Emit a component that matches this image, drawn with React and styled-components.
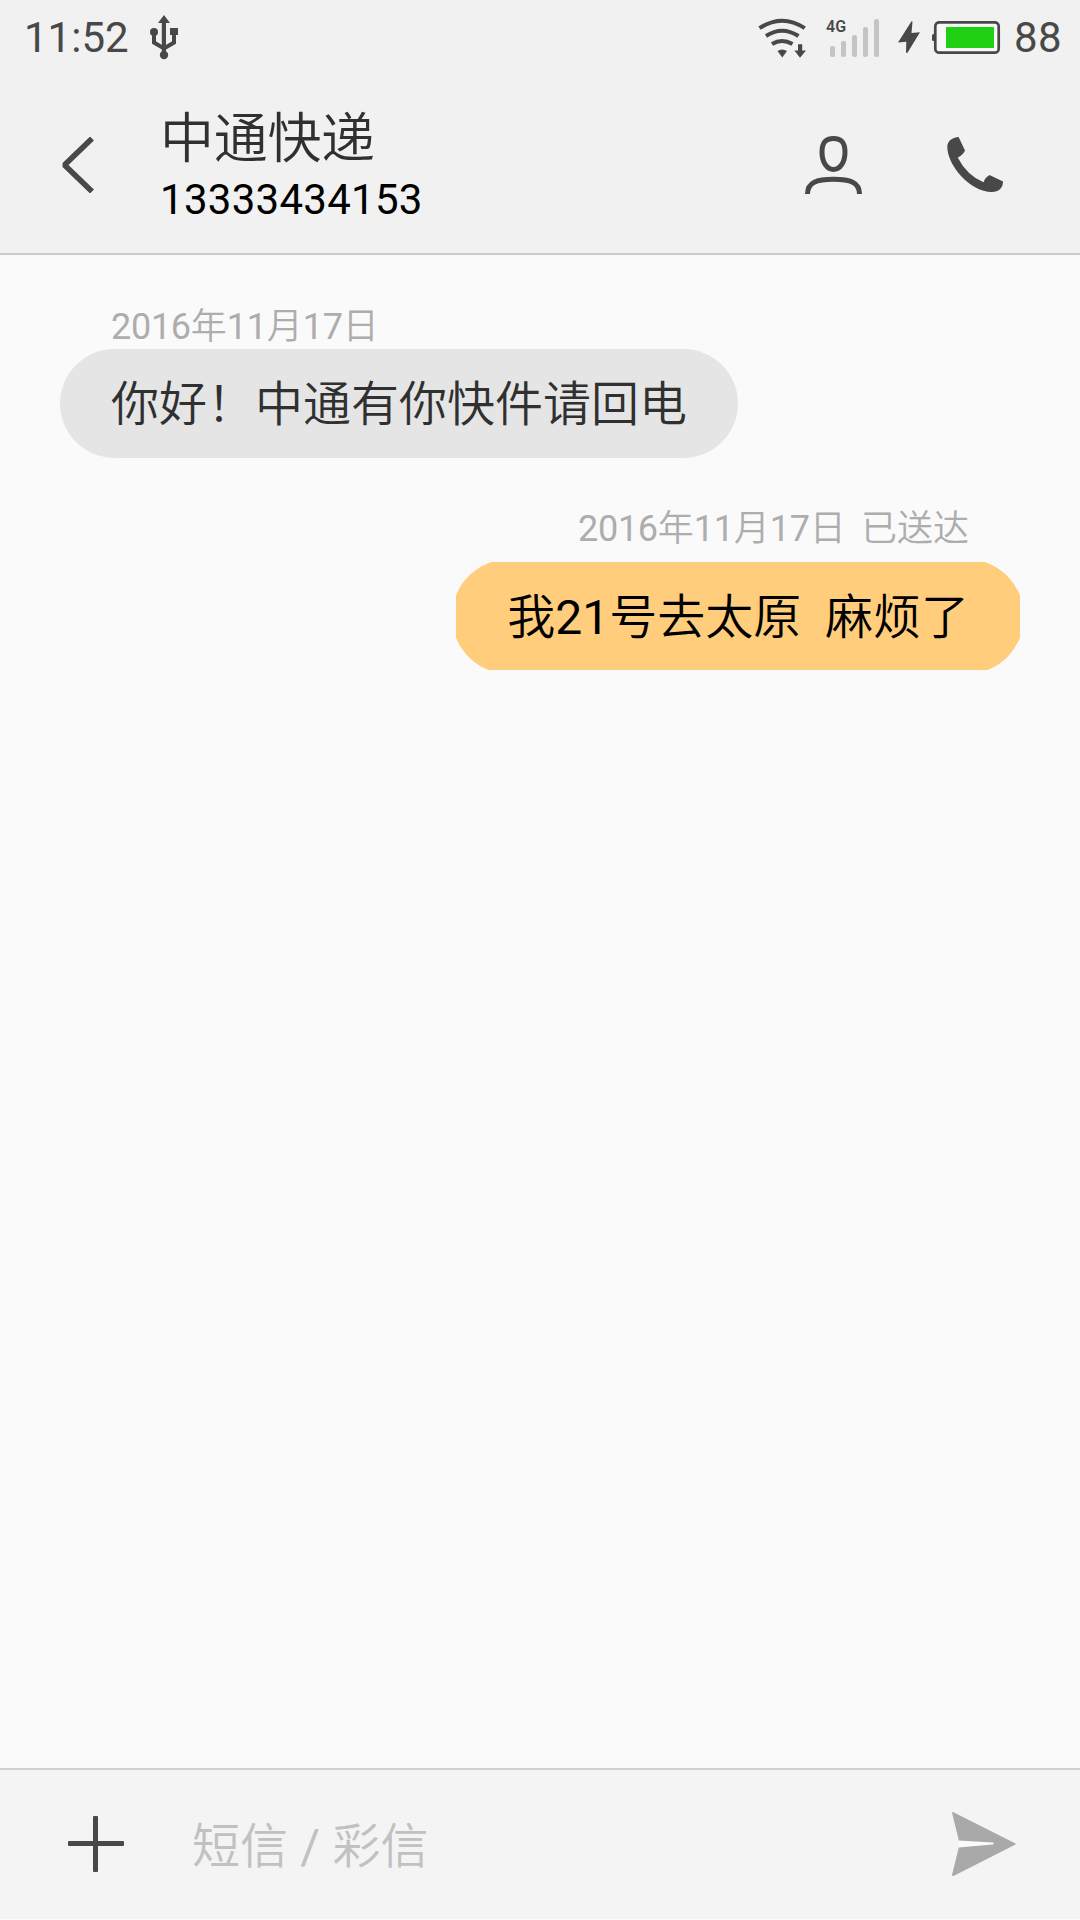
import styled, { createGlobalStyle } from "styled-components";

const GlobalStyle = createGlobalStyle`
  * {
    box-sizing: border-box;
  }

  body {
    margin: 0;
    background: #fafafa;
    font-family: Roboto, "Noto Sans CJK SC", sans-serif;
    font-weight: 350;
  }

  svg {
    display: block;
    flex-shrink: 0;
  }
`;

const Screen = styled.div`
  width: 1080px;
  height: 1920px;
  display: flex;
  flex-direction: column;
  background: #fafafa;
  overflow: hidden;
`;

const Top = styled.header`
  height: 255px;
  background: #f1f1f1;
  border-bottom: 2px solid #cbcbcb;
`;

const StatusBar = styled.div`
  height: 75px;
  display: flex;
  align-items: center;
  justify-content: space-between;
  padding: 0 18px 0 24px;
`;

const StatusGroup = styled.div`
  display: flex;
  align-items: center;
`;

const StatusText = styled.span`
  font-size: 42px;
  line-height: 75px;
  font-weight: 400;
  letter-spacing: ${(props) => props.spacing || "0"};
  color: #484848;
`;

const Signal = styled.div`
  position: relative;
  margin: 0 19px 0 20px;
`;

const Network = styled.span`
  position: absolute;
  top: 19px;
  left: 0;
  font-size: 16px;
  line-height: 16px;
  font-weight: 600;
  color: #484848;
`;

const TitleBar = styled.div`
  height: 178px;
  display: flex;
  align-items: flex-start;
  padding-left: 62px;
`;

const IconButton = styled.button`
  border: 0;
  padding: 0;
  background: none;
  margin: ${(props) => props.margin || "0"};
`;

const Contact = styled.div`
  flex: 1;
  margin: 33px 0 0 66px;
`;

const Name = styled.h1`
  margin: 0;
  font-size: 54px;
  line-height: 64px;
  font-weight: 350;
  letter-spacing: -0.3px;
  color: #303030;
`;

const Phone = styled.p`
  margin: 3px 0 0;
  font-size: 42px;
  line-height: 50px;
  font-weight: 400;
  letter-spacing: 0.28px;
  color: #000;
`;

const Messages = styled.main`
  flex: 1;
  display: flex;
  flex-direction: column;
  padding: 51px 60px 0;
`;

const Message = styled.div`
  display: flex;
  flex-direction: column;
  align-items: ${(props) => (props.sent ? "flex-end" : "flex-start")};
  margin-bottom: 50px;
`;

const Latin = styled.span`
  font-weight: 400;
`;

const Meta = styled.div`
  padding: 0 51px;
  margin-bottom: ${(props) => (props.sent ? "12px" : "1px")};
  font-size: 36px;
  line-height: 42px;
  word-spacing: -1px;
  white-space: pre;
  color: #adadad;

  ${Latin} {
    letter-spacing: -0.28px;
  }
`;

const Bubble = styled.div`
  padding: 32px 51px 29px;
  border-radius: 55px;
  background: #e5e5e5;
  font-size: 48px;
  line-height: 48px;
  white-space: pre;
  color: #303030;
`;

/* the pill is a little larger than the bubble, so its edges are cut flat */
const SentBubble = styled(Bubble)`
  position: relative;
  z-index: 0;
  overflow: hidden;
  padding-bottom: 28px;
  border-radius: 0;
  background: none;
  color: #000;

  &::before {
    content: "";
    position: absolute;
    z-index: -1;
    inset: -3.5px -4px;
    border-radius: 58px;
    background: #ffcd7c;
  }
`;

const Composer = styled.footer`
  height: 151px;
  margin-bottom: 1px;
  display: flex;
  align-items: flex-start;
  padding: 0 64px 0 68px;
  background: #f4f4f4;
  border-top: 2px solid #d0d0d0;
`;

const Placeholder = styled.div`
  flex: 1;
  margin: 53px 0 0 68px;
  font-size: 48px;
  line-height: 48px;
  word-spacing: 0.4px;
  color: #c1c1c1;
`;

/* digits and slashes are set a step heavier than the Chinese text */
const MixedText = ({ children }) =>
  children
    .split(/([\d/ ]+)/)
    .map((part, index) =>
      index % 2 ? <Latin key={index}>{part}</Latin> : part
    );

const UsbIcon = () => (
  <svg width="30" height="46" viewBox="149 14 30 46">
    <g fill="#484848">
      <path d="M164 15l6 8h-12z" />
      <rect x="161.800" y="20" width="4.200" height="34" />
      <circle cx="154" cy="32" r="4" />
      <rect x="170" y="28" width="8" height="7" />
      <circle cx="164" cy="55" r="4.200" />
    </g>
    <path
      d="M154 32v10.500l10 6 10-6V32"
      fill="none"
      stroke="#484848"
      strokeWidth="4"
    />
  </svg>
);

const WifiIcon = () => (
  <svg width="48" height="40" viewBox="758 17 48 40">
    <g fill="none" stroke="#484848" strokeWidth="4">
      <path d="M759.500 27.200Q782 12.300 804.800 27.200" />
      <path d="M766 35Q782 24.500 798.500 35" />
      <path d="M772 43Q782 36.800 792.500 43" />
    </g>
    <g fill="#484848">
      <path d="M777.500 50Q782 47 787 50L782.300 56.500z" />
      <path d="M798 43.300h4.200v6.200h3.800l-6 7.200-5.600-7.200h3.600z" />
    </g>
  </svg>
);

const SignalIcon = () => (
  <svg width="53" height="75" viewBox="826 0 53 75">
    <g fill="#c4c4c4">
      <rect x="830" y="46" width="5" height="11" rx="2" />
      <rect x="841" y="41" width="5" height="16" rx="2" />
      <rect x="852" y="35" width="5" height="22" rx="2" />
      <rect x="863" y="27" width="5" height="30" rx="2" />
      <rect x="874" y="19" width="5" height="38" rx="2" />
    </g>
  </svg>
);

const BoltIcon = () => (
  <svg width="22" height="33" viewBox="898 21 22 33">
    <path
      d="M911.500 21.300L898 42.500l8.300-.7L906 52.800h1.500L920 32.200l-8.500.9 1-11.500z"
      fill="#484848"
    />
  </svg>
);

const BatteryIcon = () => (
  <svg width="69" height="34" viewBox="932 21 69 34">
    <rect x="932" y="34" width="4" height="7" rx="1.500" fill="#484848" />
    <rect
      x="935.300"
      y="22.300"
      width="63.400"
      height="30.400"
      rx="4"
      fill="#f8f8f8"
      stroke="#484848"
      strokeWidth="2.700"
    />
    <rect x="946" y="27" width="48" height="21" fill="#20d013" />
  </svg>
);

const BackIcon = () => (
  <svg width="32" height="56" viewBox="62 137 32 56">
    <path
      d="M92 138.500L64.500 165l27.500 26.500"
      fill="none"
      stroke="#484848"
      strokeWidth="5.600"
      strokeLinejoin="bevel"
    />
  </svg>
);

const PersonIcon = () => (
  <svg width="58" height="60" viewBox="804 135 58 60">
    <g fill="none" stroke="#484848" strokeWidth="5">
      <path d="M833.500 138.500C842 138.500 845 143.500 845 152C845 162.500 840 169.500 833.500 169.500S822 162.500 822 152C822 143.500 825 138.500 833.500 138.500z" />
      <path d="M807.500 194C807.500 182 817 179.300 833.500 179.300S859.500 182 859.500 194" />
    </g>
  </svg>
);

const CallIcon = () => (
  <svg width="58" height="58" viewBox="946 136 58 58">
    <path
      d="M958.600 137L965 150.500Q963 155 957.700 157.500Q967 175.500 983.600 182.300Q985 177.500 989.500 175L1003 181.500C1003 188 998.500 192 992 192C970 192 947 165 947.300 146.500C947.500 140.500 953.500 137 958.600 137z"
      fill="#484848"
    />
  </svg>
);

const PlusIcon = () => (
  <svg width="56" height="56" viewBox="0 0 56 56" fill="#484848">
    <rect x="25" width="5" height="56" rx="1" />
    <rect y="25" width="56" height="5" rx="1" />
  </svg>
);

const SendIcon = () => (
  <svg width="64" height="64" viewBox="0 0 64 64">
    <path d="M6.500 29l35 1.500v1.500l-35 3.500z" fill="#fcfcfc" />
    <path
      d="M0 .5Q.5-.3 1.500 .2L63.500 31.500Q64.300 32 63.500 32.600L1.500 63.900Q.2 64.200 0 63L6.800 35.600 41 32.500Q42.500 31.700 41 30.500L6.800 28.600z"
      fill="#a9a9a9"
    />
  </svg>
);

const messages = [
  { id: 1, meta: "2016年11月17日", text: "你好！中通有你快件请回电" },
  {
    id: 2,
    meta: "2016年11月17日  已送达",
    text: "我21号去太原  麻烦了",
    sent: true,
  },
];

export default function App() {
  return (
    <Screen lang="zh-CN">
      <GlobalStyle />
      <Top>
        <StatusBar>
          <StatusGroup>
            <StatusText>11:52</StatusText>
            <IconButton as="span" margin="0 0 2px 20px">
              <UsbIcon />
            </IconButton>
          </StatusGroup>
          <StatusGroup>
            <WifiIcon />
            <Signal>
              <SignalIcon />
              <Network>4G</Network>
            </Signal>
            <BoltIcon />
            <IconButton as="span" margin="0 13px 0 12px">
              <BatteryIcon />
            </IconButton>
            <StatusText spacing="0.4px">88</StatusText>
          </StatusGroup>
        </StatusBar>
        <TitleBar>
          <IconButton margin="62px 0 0">
            <BackIcon />
          </IconButton>
          <Contact>
            <Name>中通快递</Name>
            <Phone>13333434153</Phone>
          </Contact>
          <IconButton margin="60px 84px 0 0">
            <PersonIcon />
          </IconButton>
          <IconButton margin="61px 76px 0 0">
            <CallIcon />
          </IconButton>
        </TitleBar>
      </Top>
      <Messages>
        {messages.map((message) => {
          const Body = message.sent ? SentBubble : Bubble;
          return (
            <Message key={message.id} sent={message.sent}>
              <Meta sent={message.sent}>
                <MixedText>{message.meta}</MixedText>
              </Meta>
              <Body>
                <MixedText>{message.text}</MixedText>
              </Body>
            </Message>
          );
        })}
      </Messages>
      <Composer>
        <IconButton margin="46px 0 0">
          <PlusIcon />
        </IconButton>
        <Placeholder>
          <MixedText>短信 / 彩信</MixedText>
        </Placeholder>
        <IconButton margin="42px 0 0">
          <SendIcon />
        </IconButton>
      </Composer>
    </Screen>
  );
}
